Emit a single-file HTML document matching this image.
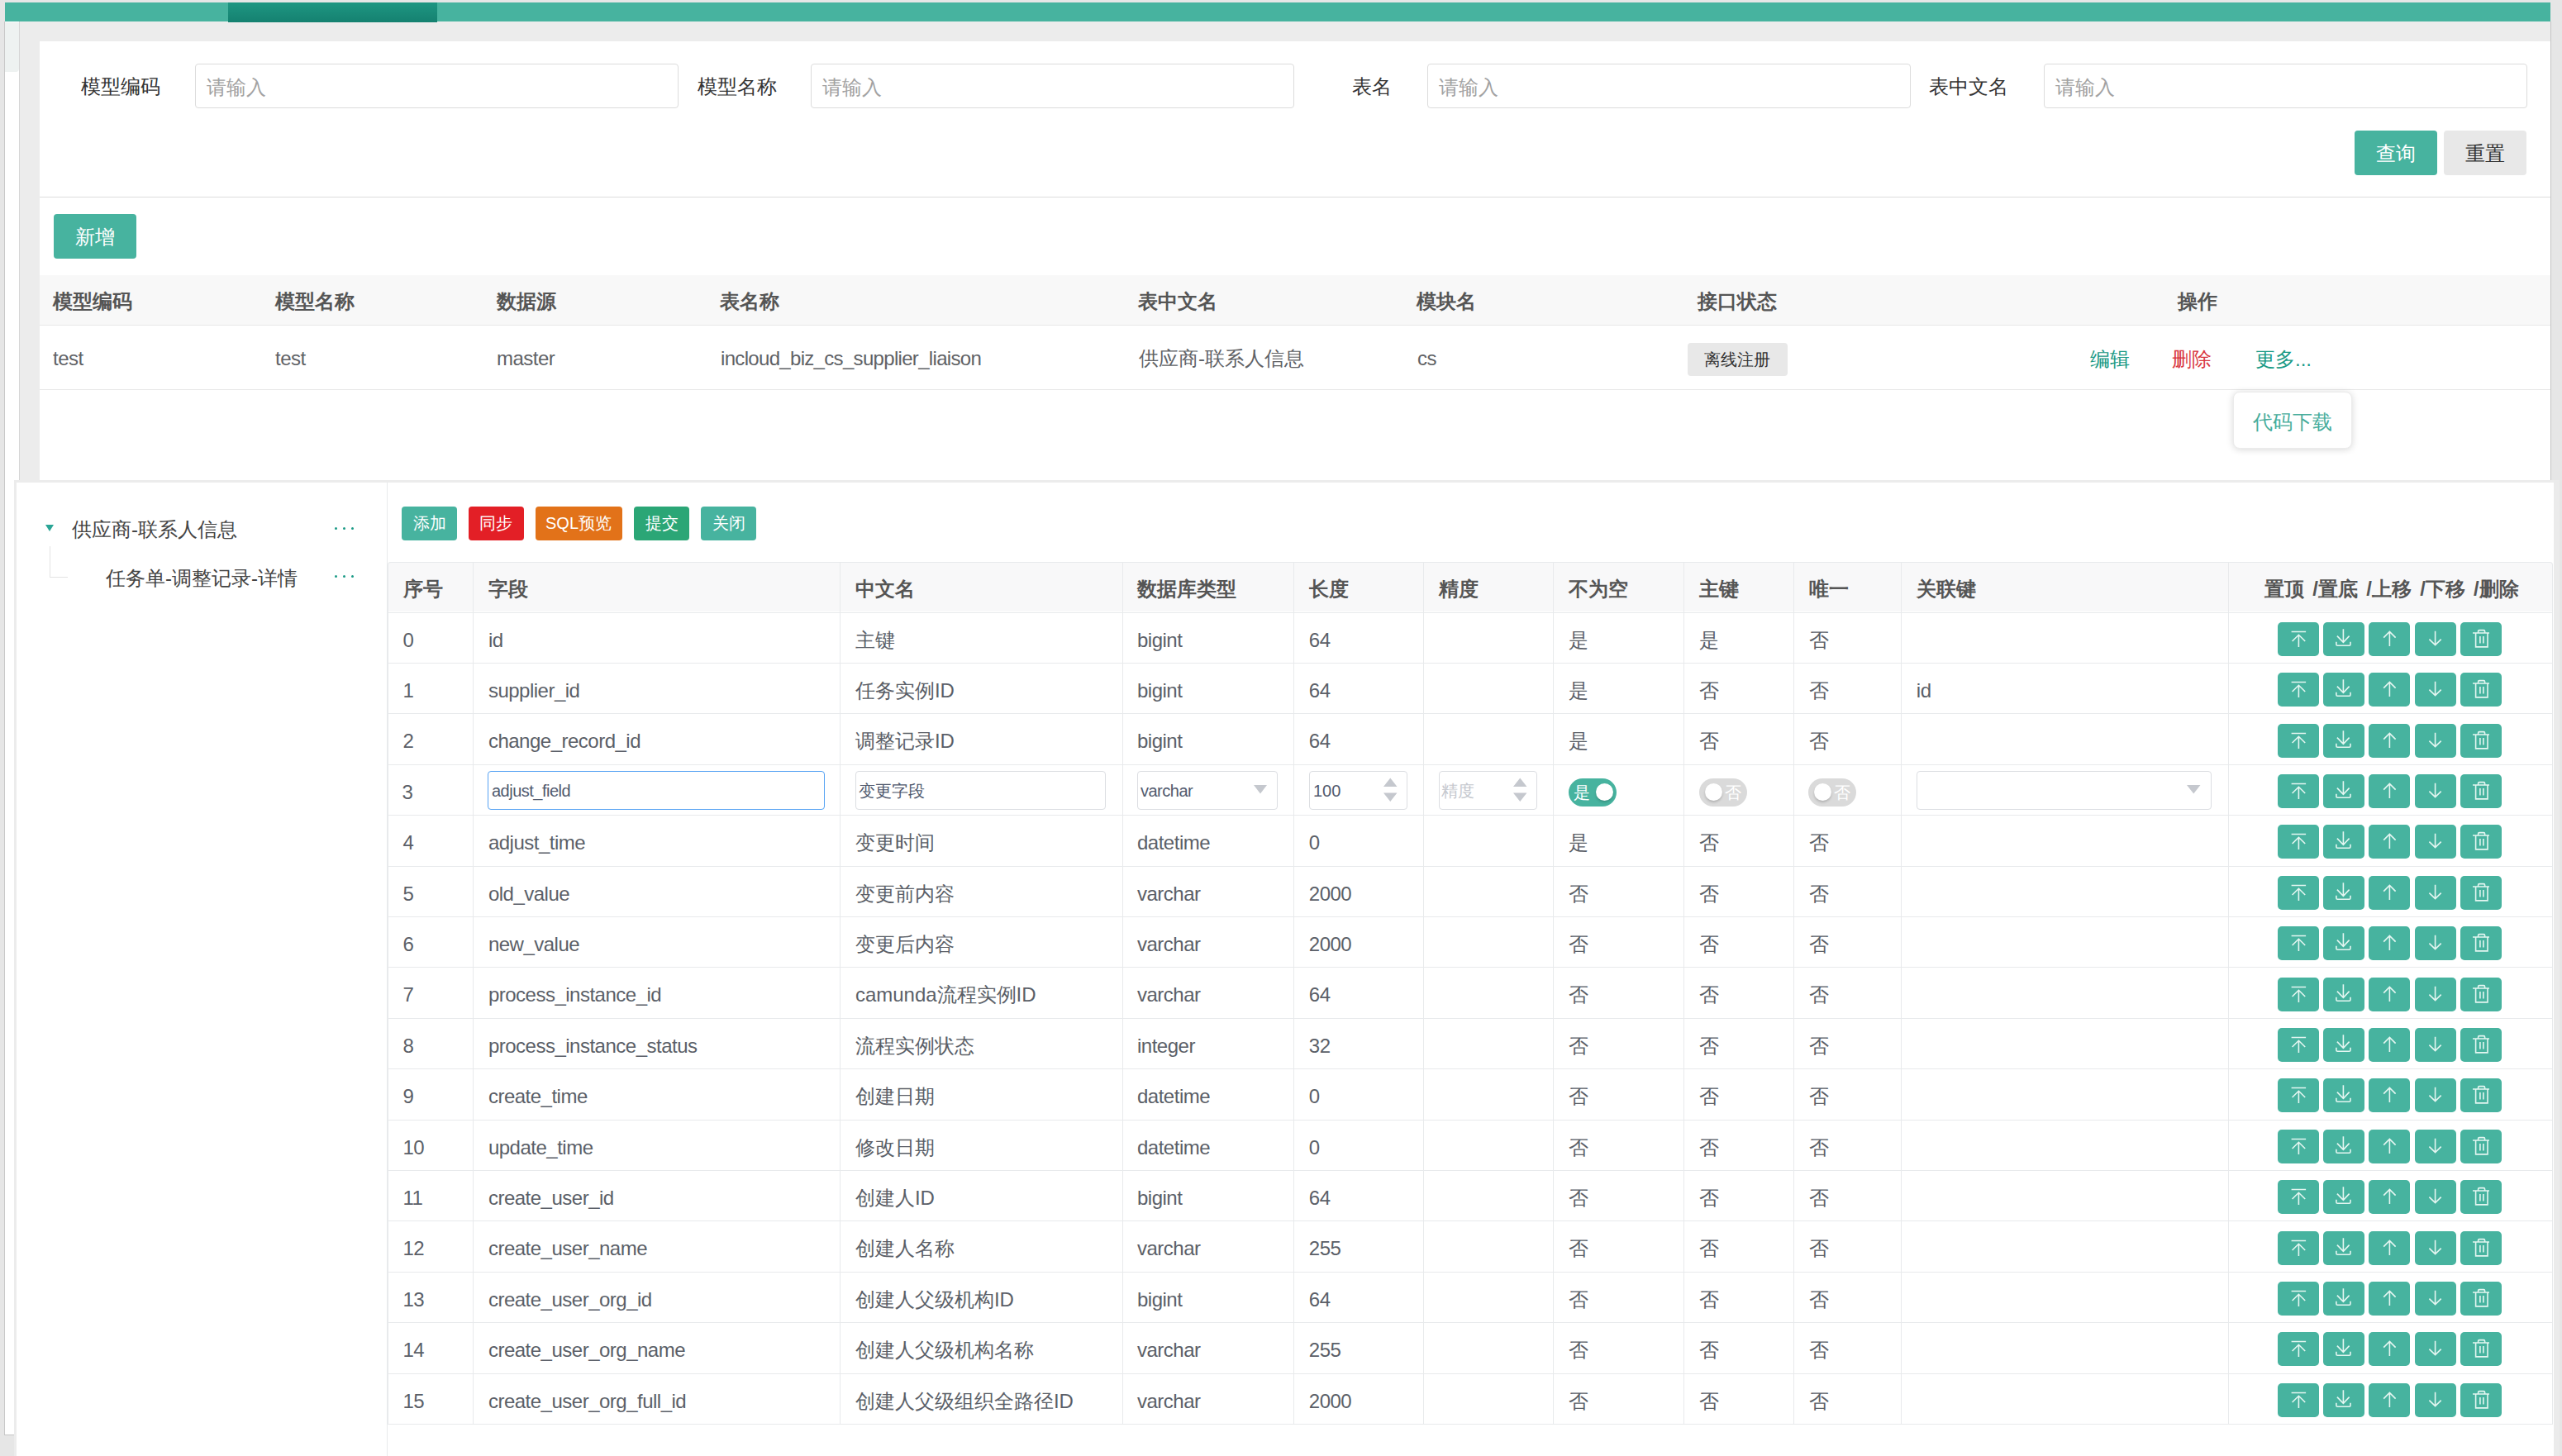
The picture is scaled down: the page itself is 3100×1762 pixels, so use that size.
<!DOCTYPE html><html><head><meta charset="utf-8"><style>
*{box-sizing:border-box;margin:0;padding:0}
html,body{width:3100px;height:1762px;overflow:hidden;background:#e6e6e6;font-family:"Liberation Sans", sans-serif;}
.a{position:absolute}
.t{position:absolute;white-space:nowrap;font-size:24px;line-height:24px}
.en{letter-spacing:-0.5px}
.btn{position:absolute;border-radius:4px;color:#fff;text-align:center;white-space:nowrap}
.inp{position:absolute;border:1px solid #dcdee2;border-radius:4px;background:#fff}
.hd{font-weight:bold;color:#515a6e}
.cell{color:#5b5f68}
.vl{position:absolute;width:1px;background:#e8eaec}
.hl{position:absolute;height:1px;background:#e8eaec}
.ab{position:absolute;width:50px;height:41px;border-radius:5px;background:#47b39f}
.ab svg{position:absolute;left:0;top:0}
.sw{position:absolute;width:58px;height:34px;border-radius:17px}
.knob{position:absolute;width:21px;height:21px;border-radius:50%;background:#fff;top:6px;box-shadow:0 2px 3px rgba(0,0,0,.18)}
</style></head><body><div class="a" style="left:5px;top:26px;width:1px;height:1711px;background:#c8c8c8"></div>
<div class="a" style="left:6px;top:26px;width:17px;height:1710px;background:#fff"></div><div class="a" style="left:5px;top:1736px;width:14px;height:1px;background:#c4c4c4"></div>
<div class="a" style="left:6px;top:27px;width:17px;height:60px;background:#eef2f1;border-radius:0 0 4px 0"></div>
<div class="a" style="left:23px;top:26px;width:1px;height:1710px;background:#d6d6d6"></div>
<div class="a" style="left:24px;top:26px;width:3062px;height:555px;background:#ececec"></div>
<div class="a" style="left:6px;top:3px;width:3080px;height:23px;background:#47b39f"></div>
<div class="a" style="left:276px;top:3px;width:253px;height:23.5px;background:linear-gradient(#1e9682,#158170)"></div>
<div class="a" style="left:48px;top:50px;width:3038px;height:531px;background:#fff"></div>
<div class="a" style="left:3086px;top:26px;width:1px;height:555px;background:#c4c4c4"></div>
<div class="t" style="left:-106px;width:300px;text-align:right;top:93px;color:#333">模型编码</div>
<div class="inp" style="left:236px;top:77px;width:585px;height:54px;border-color:#dcdcdc"></div>
<div class="t" style="left:250px;top:94px;color:#a2a2a2">请输入</div>
<div class="t" style="left:640px;width:300px;text-align:right;top:93px;color:#333">模型名称</div>
<div class="inp" style="left:981px;top:77px;width:585px;height:54px;border-color:#dcdcdc"></div>
<div class="t" style="left:995px;top:94px;color:#a2a2a2">请输入</div>
<div class="t" style="left:1384px;width:300px;text-align:right;top:93px;color:#333">表名</div>
<div class="inp" style="left:1727px;top:77px;width:585px;height:54px;border-color:#dcdcdc"></div>
<div class="t" style="left:1741px;top:94px;color:#a2a2a2">请输入</div>
<div class="t" style="left:2130px;width:300px;text-align:right;top:93px;color:#333">表中文名</div>
<div class="inp" style="left:2473px;top:77px;width:585px;height:54px;border-color:#dcdcdc"></div>
<div class="t" style="left:2487px;top:94px;color:#a2a2a2">请输入</div>
<div class="btn" style="left:2849px;top:158px;width:100px;height:54px;line-height:56px;font-size:24px;background:#47b39f">查询</div>
<div class="btn" style="left:2957px;top:158px;width:100px;height:54px;line-height:56px;font-size:24px;background:#e8e8e8;color:#333">重置</div>
<div class="a" style="left:48px;top:238px;width:3038px;height:1px;background:#dcdcdc"></div>
<div class="btn" style="left:65px;top:259px;width:100px;height:54px;line-height:56px;font-size:24px;background:#47b39f">新增</div>
<div class="a" style="left:48px;top:333px;width:3038px;height:61px;background:#f8f8f8;border-bottom:1px solid #e8e8e8"></div>
<div class="t hd" style="left:64px;top:353px;color:#555">模型编码</div>
<div class="t hd" style="left:333px;top:353px;color:#555">模型名称</div>
<div class="t hd" style="left:601px;top:353px;color:#555">数据源</div>
<div class="t hd" style="left:871px;top:353px;color:#555">表名称</div>
<div class="t hd" style="left:1377px;top:353px;color:#555">表中文名</div>
<div class="t hd" style="left:1714px;top:353px;color:#555">模块名</div>
<div class="t hd" style="left:2054px;top:353px;color:#555">接口状态</div>
<div class="t hd" style="left:2635px;top:353px;color:#555">操作</div>
<div class="a" style="left:48px;top:471px;width:3038px;height:1px;background:#e8e8e8"></div>
<div class="t en" style="left:64px;top:422px;color:#606266;">test</div>
<div class="t en" style="left:333px;top:422px;color:#606266;">test</div>
<div class="t en" style="left:601px;top:422px;color:#606266;">master</div>
<div class="t en" style="left:872px;top:422px;color:#606266;letter-spacing:-0.68px">incloud_biz_cs_supplier_liaison</div>
<div class="t" style="left:1378px;top:422px;color:#606266;">供应商-联系人信息</div>
<div class="t en" style="left:1715px;top:422px;color:#606266;">cs</div>
<div class="a" style="left:2042px;top:415px;width:121px;height:40px;background:#e8e8e8;border-radius:4px"></div>
<div class="t" style="left:2062px;top:425px;font-size:20px;line-height:20px;color:#333">离线注册</div>
<div class="t" style="left:2529px;top:423px;color:#1a9a86">编辑</div>
<div class="t" style="left:2628px;top:423px;color:#d9363e">删除</div>
<div class="t" style="left:2729px;top:423px;color:#1a9a86">更多...</div>
<div class="a" style="left:2702px;top:474px;width:144px;height:69px;background:#fff;border-radius:8px;box-shadow:0 1px 8px rgba(0,0,0,.16);border:1px solid #ececec"></div>
<div class="t" style="left:2726px;top:499px;color:#47ad9c">代码下载</div>
<div class="a" style="left:17px;top:581px;width:3073px;height:1200px;background:#fff;border:3px solid #ececec;border-right:none;border-bottom:none"></div><div class="a" style="left:3090px;top:581px;width:7px;height:1200px;background:#ebebeb"></div>
<div class="a" style="left:468px;top:584px;width:1px;height:1200px;background:#e8eaec"></div>
<svg class="a" style="left:54px;top:634px" width="12" height="10"><path d="M1 1 L11 1 L6 9 Z" fill="#2ba596"/></svg>
<div class="t" style="left:87px;top:629px;color:#444">供应商-联系人信息</div>
<div class="a" style="left:60px;top:661px;width:1px;height:37px;background:#e3e3e3"></div>
<div class="a" style="left:60px;top:698px;width:22px;height:1px;background:#e3e3e3"></div>
<div class="t" style="left:128px;top:688px;color:#444">任务单-调整记录-详情</div>
<div class="a" style="left:405px;top:637.5px;width:3px;height:3px;border-radius:50%;background:#1a9a86"></div>
<div class="a" style="left:415px;top:637.5px;width:3px;height:3px;border-radius:50%;background:#1a9a86"></div>
<div class="a" style="left:425px;top:637.5px;width:3px;height:3px;border-radius:50%;background:#1a9a86"></div>
<div class="a" style="left:405px;top:695.5px;width:3px;height:3px;border-radius:50%;background:#1a9a86"></div>
<div class="a" style="left:415px;top:695.5px;width:3px;height:3px;border-radius:50%;background:#1a9a86"></div>
<div class="a" style="left:425px;top:695.5px;width:3px;height:3px;border-radius:50%;background:#1a9a86"></div>
<div class="btn" style="left:486px;top:613px;width:67px;height:41px;line-height:41px;font-size:20px;background:#47b39f">添加</div>
<div class="btn" style="left:566.5px;top:613px;width:67px;height:41px;line-height:41px;font-size:20px;background:#e31f26">同步</div>
<div class="btn" style="left:647.5px;top:613px;width:105px;height:41px;line-height:41px;font-size:20px;background:#e27219">SQL预览</div>
<div class="btn" style="left:767px;top:613px;width:67px;height:41px;line-height:41px;font-size:20px;background:#2ba676">提交</div>
<div class="btn" style="left:848px;top:613px;width:67px;height:41px;line-height:41px;font-size:20px;background:#47b39f">关闭</div>
<div class="a" style="left:469px;top:680.3px;width:2620px;height:60.200000000000045px;background:#f8f8f9;border-radius:4px 4px 0 0"></div>
<div class="a" style="left:469px;top:680.3px;width:2620px;height:1043.6000000000001px;border:1px solid #e8eaec;border-bottom:none;border-radius:4px 4px 0 0"></div>
<div class="vl" style="left:572.4px;top:680.3px;height:1042.6000000000001px"></div>
<div class="vl" style="left:1016.4px;top:680.3px;height:1042.6000000000001px"></div>
<div class="vl" style="left:1357.5px;top:680.3px;height:1042.6000000000001px"></div>
<div class="vl" style="left:1565.3px;top:680.3px;height:1042.6000000000001px"></div>
<div class="vl" style="left:1722.2px;top:680.3px;height:1042.6000000000001px"></div>
<div class="vl" style="left:1879.3px;top:680.3px;height:1042.6000000000001px"></div>
<div class="vl" style="left:2037.1px;top:680.3px;height:1042.6000000000001px"></div>
<div class="vl" style="left:2170px;top:680.3px;height:1042.6000000000001px"></div>
<div class="vl" style="left:2300.3px;top:680.3px;height:1042.6000000000001px"></div>
<div class="vl" style="left:2695.8px;top:680.3px;height:1042.6000000000001px"></div>
<div class="hl" style="left:469px;top:740.50px;width:2620px"></div>
<div class="hl" style="left:469px;top:801.90px;width:2620px"></div>
<div class="hl" style="left:469px;top:863.30px;width:2620px"></div>
<div class="hl" style="left:469px;top:924.70px;width:2620px"></div>
<div class="hl" style="left:469px;top:986.10px;width:2620px"></div>
<div class="hl" style="left:469px;top:1047.50px;width:2620px"></div>
<div class="hl" style="left:469px;top:1108.90px;width:2620px"></div>
<div class="hl" style="left:469px;top:1170.30px;width:2620px"></div>
<div class="hl" style="left:469px;top:1231.70px;width:2620px"></div>
<div class="hl" style="left:469px;top:1293.10px;width:2620px"></div>
<div class="hl" style="left:469px;top:1354.50px;width:2620px"></div>
<div class="hl" style="left:469px;top:1415.90px;width:2620px"></div>
<div class="hl" style="left:469px;top:1477.30px;width:2620px"></div>
<div class="hl" style="left:469px;top:1538.70px;width:2620px"></div>
<div class="hl" style="left:469px;top:1600.10px;width:2620px"></div>
<div class="hl" style="left:469px;top:1661.50px;width:2620px"></div>
<div class="hl" style="left:469px;top:1722.90px;width:2620px"></div>
<div class="t hd" style="left:487.5px;top:701px;color:#555">序号</div>
<div class="t hd" style="left:590.9px;top:701px;color:#555">字段</div>
<div class="t hd" style="left:1034.9px;top:701px;color:#555">中文名</div>
<div class="t hd" style="left:1376.0px;top:701px;color:#555">数据库类型</div>
<div class="t hd" style="left:1583.8px;top:701px;color:#555">长度</div>
<div class="t hd" style="left:1740.7px;top:701px;color:#555">精度</div>
<div class="t hd" style="left:1897.8px;top:701px;color:#555">不为空</div>
<div class="t hd" style="left:2055.6px;top:701px;color:#555">主键</div>
<div class="t hd" style="left:2188.5px;top:701px;color:#555">唯一</div>
<div class="t hd" style="left:2318.8px;top:701px;color:#555">关联键</div>
<div class="t hd" style="left:2740px;top:701px;color:#555;word-spacing:3.6px">置顶 /置底 /上移 /下移 /删除</div>
<div class="t cell en" style="left:487.5px;top:762.50px">0</div>
<div class="t cell en" style="left:590.9px;top:762.50px">id</div>
<div class="t cell" style="left:1034.9px;top:762.50px">主键</div>
<div class="t cell en" style="left:1376.0px;top:762.50px">bigint</div>
<div class="t cell en" style="left:1583.8px;top:762.50px">64</div>
<div class="t cell" style="left:1897.8px;top:762.50px">是</div>
<div class="t cell" style="left:2055.6px;top:762.50px">是</div>
<div class="t cell" style="left:2188.5px;top:762.50px">否</div>
<div class="ab" style="left:2755.7px;top:752.70px"><svg width="50" height="41" stroke="#e4f6f1" stroke-width="1.6" fill="none" stroke-linecap="butt" stroke-linejoin="miter"><path d="M16.6 11.5 H34.1 M25.4 15.3 V30 M17.6 23 L25.4 15.3 L33.2 23"/></svg></div>
<div class="ab" style="left:2811px;top:752.70px"><svg width="50" height="41" stroke="#e4f6f1" stroke-width="1.6" fill="none" stroke-linecap="butt" stroke-linejoin="miter"><path d="M24.4 8.3 V24.3 M16.9 16.6 L24.4 24.3 L31.6 16.6 M15.9 23.8 V26.8 Q15.9 28.2 17.3 28.2 H31.6 Q33 28.2 33 26.8 V23.8"/></svg></div>
<div class="ab" style="left:2866px;top:752.70px"><svg width="50" height="41" stroke="#e4f6f1" stroke-width="1.6" fill="none" stroke-linecap="butt" stroke-linejoin="miter"><path d="M25.4 11.4 V29 M18.2 18.6 L25.4 11.4 L32.6 18.6"/></svg></div>
<div class="ab" style="left:2921.8px;top:752.70px"><svg width="50" height="41" stroke="#e4f6f1" stroke-width="1.6" fill="none" stroke-linecap="butt" stroke-linejoin="miter"><path d="M24.6 10.7 V27.6 M17.4 20.6 L24.6 27.6 L31.7 20.6"/></svg></div>
<div class="ab" style="left:2976.5px;top:752.70px"><svg width="50" height="41" stroke="#e4f6f1" stroke-width="1.6" fill="none" stroke-linecap="butt" stroke-linejoin="miter"><path d="M15 13 H35 M21.6 12.8 V11 Q21.6 9.6 23 9.6 H28.2 Q29.6 9.6 29.6 11 V12.8 M18.6 13 V29.9 H33 V13 M23.9 17 V25.5 M27.9 17 V25.5"/></svg></div>
<div class="t cell en" style="left:487.5px;top:823.90px">1</div>
<div class="t cell en" style="left:590.9px;top:823.90px">supplier_id</div>
<div class="t cell" style="left:1034.9px;top:823.90px">任务实例ID</div>
<div class="t cell en" style="left:1376.0px;top:823.90px">bigint</div>
<div class="t cell en" style="left:1583.8px;top:823.90px">64</div>
<div class="t cell" style="left:1897.8px;top:823.90px">是</div>
<div class="t cell" style="left:2055.6px;top:823.90px">否</div>
<div class="t cell" style="left:2188.5px;top:823.90px">否</div>
<div class="t cell en" style="left:2318.8px;top:823.90px">id</div>
<div class="ab" style="left:2755.7px;top:814.10px"><svg width="50" height="41" stroke="#e4f6f1" stroke-width="1.6" fill="none" stroke-linecap="butt" stroke-linejoin="miter"><path d="M16.6 11.5 H34.1 M25.4 15.3 V30 M17.6 23 L25.4 15.3 L33.2 23"/></svg></div>
<div class="ab" style="left:2811px;top:814.10px"><svg width="50" height="41" stroke="#e4f6f1" stroke-width="1.6" fill="none" stroke-linecap="butt" stroke-linejoin="miter"><path d="M24.4 8.3 V24.3 M16.9 16.6 L24.4 24.3 L31.6 16.6 M15.9 23.8 V26.8 Q15.9 28.2 17.3 28.2 H31.6 Q33 28.2 33 26.8 V23.8"/></svg></div>
<div class="ab" style="left:2866px;top:814.10px"><svg width="50" height="41" stroke="#e4f6f1" stroke-width="1.6" fill="none" stroke-linecap="butt" stroke-linejoin="miter"><path d="M25.4 11.4 V29 M18.2 18.6 L25.4 11.4 L32.6 18.6"/></svg></div>
<div class="ab" style="left:2921.8px;top:814.10px"><svg width="50" height="41" stroke="#e4f6f1" stroke-width="1.6" fill="none" stroke-linecap="butt" stroke-linejoin="miter"><path d="M24.6 10.7 V27.6 M17.4 20.6 L24.6 27.6 L31.7 20.6"/></svg></div>
<div class="ab" style="left:2976.5px;top:814.10px"><svg width="50" height="41" stroke="#e4f6f1" stroke-width="1.6" fill="none" stroke-linecap="butt" stroke-linejoin="miter"><path d="M15 13 H35 M21.6 12.8 V11 Q21.6 9.6 23 9.6 H28.2 Q29.6 9.6 29.6 11 V12.8 M18.6 13 V29.9 H33 V13 M23.9 17 V25.5 M27.9 17 V25.5"/></svg></div>
<div class="t cell en" style="left:487.5px;top:885.30px">2</div>
<div class="t cell en" style="left:590.9px;top:885.30px">change_record_id</div>
<div class="t cell" style="left:1034.9px;top:885.30px">调整记录ID</div>
<div class="t cell en" style="left:1376.0px;top:885.30px">bigint</div>
<div class="t cell en" style="left:1583.8px;top:885.30px">64</div>
<div class="t cell" style="left:1897.8px;top:885.30px">是</div>
<div class="t cell" style="left:2055.6px;top:885.30px">否</div>
<div class="t cell" style="left:2188.5px;top:885.30px">否</div>
<div class="ab" style="left:2755.7px;top:875.50px"><svg width="50" height="41" stroke="#e4f6f1" stroke-width="1.6" fill="none" stroke-linecap="butt" stroke-linejoin="miter"><path d="M16.6 11.5 H34.1 M25.4 15.3 V30 M17.6 23 L25.4 15.3 L33.2 23"/></svg></div>
<div class="ab" style="left:2811px;top:875.50px"><svg width="50" height="41" stroke="#e4f6f1" stroke-width="1.6" fill="none" stroke-linecap="butt" stroke-linejoin="miter"><path d="M24.4 8.3 V24.3 M16.9 16.6 L24.4 24.3 L31.6 16.6 M15.9 23.8 V26.8 Q15.9 28.2 17.3 28.2 H31.6 Q33 28.2 33 26.8 V23.8"/></svg></div>
<div class="ab" style="left:2866px;top:875.50px"><svg width="50" height="41" stroke="#e4f6f1" stroke-width="1.6" fill="none" stroke-linecap="butt" stroke-linejoin="miter"><path d="M25.4 11.4 V29 M18.2 18.6 L25.4 11.4 L32.6 18.6"/></svg></div>
<div class="ab" style="left:2921.8px;top:875.50px"><svg width="50" height="41" stroke="#e4f6f1" stroke-width="1.6" fill="none" stroke-linecap="butt" stroke-linejoin="miter"><path d="M24.6 10.7 V27.6 M17.4 20.6 L24.6 27.6 L31.7 20.6"/></svg></div>
<div class="ab" style="left:2976.5px;top:875.50px"><svg width="50" height="41" stroke="#e4f6f1" stroke-width="1.6" fill="none" stroke-linecap="butt" stroke-linejoin="miter"><path d="M15 13 H35 M21.6 12.8 V11 Q21.6 9.6 23 9.6 H28.2 Q29.6 9.6 29.6 11 V12.8 M18.6 13 V29.9 H33 V13 M23.9 17 V25.5 M27.9 17 V25.5"/></svg></div>
<div class="ab" style="left:2755.7px;top:936.90px"><svg width="50" height="41" stroke="#e4f6f1" stroke-width="1.6" fill="none" stroke-linecap="butt" stroke-linejoin="miter"><path d="M16.6 11.5 H34.1 M25.4 15.3 V30 M17.6 23 L25.4 15.3 L33.2 23"/></svg></div>
<div class="ab" style="left:2811px;top:936.90px"><svg width="50" height="41" stroke="#e4f6f1" stroke-width="1.6" fill="none" stroke-linecap="butt" stroke-linejoin="miter"><path d="M24.4 8.3 V24.3 M16.9 16.6 L24.4 24.3 L31.6 16.6 M15.9 23.8 V26.8 Q15.9 28.2 17.3 28.2 H31.6 Q33 28.2 33 26.8 V23.8"/></svg></div>
<div class="ab" style="left:2866px;top:936.90px"><svg width="50" height="41" stroke="#e4f6f1" stroke-width="1.6" fill="none" stroke-linecap="butt" stroke-linejoin="miter"><path d="M25.4 11.4 V29 M18.2 18.6 L25.4 11.4 L32.6 18.6"/></svg></div>
<div class="ab" style="left:2921.8px;top:936.90px"><svg width="50" height="41" stroke="#e4f6f1" stroke-width="1.6" fill="none" stroke-linecap="butt" stroke-linejoin="miter"><path d="M24.6 10.7 V27.6 M17.4 20.6 L24.6 27.6 L31.7 20.6"/></svg></div>
<div class="ab" style="left:2976.5px;top:936.90px"><svg width="50" height="41" stroke="#e4f6f1" stroke-width="1.6" fill="none" stroke-linecap="butt" stroke-linejoin="miter"><path d="M15 13 H35 M21.6 12.8 V11 Q21.6 9.6 23 9.6 H28.2 Q29.6 9.6 29.6 11 V12.8 M18.6 13 V29.9 H33 V13 M23.9 17 V25.5 M27.9 17 V25.5"/></svg></div>
<div class="t cell en" style="left:487.5px;top:1008.10px">4</div>
<div class="t cell en" style="left:590.9px;top:1008.10px">adjust_time</div>
<div class="t cell" style="left:1034.9px;top:1008.10px">变更时间</div>
<div class="t cell en" style="left:1376.0px;top:1008.10px">datetime</div>
<div class="t cell en" style="left:1583.8px;top:1008.10px">0</div>
<div class="t cell" style="left:1897.8px;top:1008.10px">是</div>
<div class="t cell" style="left:2055.6px;top:1008.10px">否</div>
<div class="t cell" style="left:2188.5px;top:1008.10px">否</div>
<div class="ab" style="left:2755.7px;top:998.30px"><svg width="50" height="41" stroke="#e4f6f1" stroke-width="1.6" fill="none" stroke-linecap="butt" stroke-linejoin="miter"><path d="M16.6 11.5 H34.1 M25.4 15.3 V30 M17.6 23 L25.4 15.3 L33.2 23"/></svg></div>
<div class="ab" style="left:2811px;top:998.30px"><svg width="50" height="41" stroke="#e4f6f1" stroke-width="1.6" fill="none" stroke-linecap="butt" stroke-linejoin="miter"><path d="M24.4 8.3 V24.3 M16.9 16.6 L24.4 24.3 L31.6 16.6 M15.9 23.8 V26.8 Q15.9 28.2 17.3 28.2 H31.6 Q33 28.2 33 26.8 V23.8"/></svg></div>
<div class="ab" style="left:2866px;top:998.30px"><svg width="50" height="41" stroke="#e4f6f1" stroke-width="1.6" fill="none" stroke-linecap="butt" stroke-linejoin="miter"><path d="M25.4 11.4 V29 M18.2 18.6 L25.4 11.4 L32.6 18.6"/></svg></div>
<div class="ab" style="left:2921.8px;top:998.30px"><svg width="50" height="41" stroke="#e4f6f1" stroke-width="1.6" fill="none" stroke-linecap="butt" stroke-linejoin="miter"><path d="M24.6 10.7 V27.6 M17.4 20.6 L24.6 27.6 L31.7 20.6"/></svg></div>
<div class="ab" style="left:2976.5px;top:998.30px"><svg width="50" height="41" stroke="#e4f6f1" stroke-width="1.6" fill="none" stroke-linecap="butt" stroke-linejoin="miter"><path d="M15 13 H35 M21.6 12.8 V11 Q21.6 9.6 23 9.6 H28.2 Q29.6 9.6 29.6 11 V12.8 M18.6 13 V29.9 H33 V13 M23.9 17 V25.5 M27.9 17 V25.5"/></svg></div>
<div class="t cell en" style="left:487.5px;top:1069.50px">5</div>
<div class="t cell en" style="left:590.9px;top:1069.50px">old_value</div>
<div class="t cell" style="left:1034.9px;top:1069.50px">变更前内容</div>
<div class="t cell en" style="left:1376.0px;top:1069.50px">varchar</div>
<div class="t cell en" style="left:1583.8px;top:1069.50px">2000</div>
<div class="t cell" style="left:1897.8px;top:1069.50px">否</div>
<div class="t cell" style="left:2055.6px;top:1069.50px">否</div>
<div class="t cell" style="left:2188.5px;top:1069.50px">否</div>
<div class="ab" style="left:2755.7px;top:1059.70px"><svg width="50" height="41" stroke="#e4f6f1" stroke-width="1.6" fill="none" stroke-linecap="butt" stroke-linejoin="miter"><path d="M16.6 11.5 H34.1 M25.4 15.3 V30 M17.6 23 L25.4 15.3 L33.2 23"/></svg></div>
<div class="ab" style="left:2811px;top:1059.70px"><svg width="50" height="41" stroke="#e4f6f1" stroke-width="1.6" fill="none" stroke-linecap="butt" stroke-linejoin="miter"><path d="M24.4 8.3 V24.3 M16.9 16.6 L24.4 24.3 L31.6 16.6 M15.9 23.8 V26.8 Q15.9 28.2 17.3 28.2 H31.6 Q33 28.2 33 26.8 V23.8"/></svg></div>
<div class="ab" style="left:2866px;top:1059.70px"><svg width="50" height="41" stroke="#e4f6f1" stroke-width="1.6" fill="none" stroke-linecap="butt" stroke-linejoin="miter"><path d="M25.4 11.4 V29 M18.2 18.6 L25.4 11.4 L32.6 18.6"/></svg></div>
<div class="ab" style="left:2921.8px;top:1059.70px"><svg width="50" height="41" stroke="#e4f6f1" stroke-width="1.6" fill="none" stroke-linecap="butt" stroke-linejoin="miter"><path d="M24.6 10.7 V27.6 M17.4 20.6 L24.6 27.6 L31.7 20.6"/></svg></div>
<div class="ab" style="left:2976.5px;top:1059.70px"><svg width="50" height="41" stroke="#e4f6f1" stroke-width="1.6" fill="none" stroke-linecap="butt" stroke-linejoin="miter"><path d="M15 13 H35 M21.6 12.8 V11 Q21.6 9.6 23 9.6 H28.2 Q29.6 9.6 29.6 11 V12.8 M18.6 13 V29.9 H33 V13 M23.9 17 V25.5 M27.9 17 V25.5"/></svg></div>
<div class="t cell en" style="left:487.5px;top:1130.90px">6</div>
<div class="t cell en" style="left:590.9px;top:1130.90px">new_value</div>
<div class="t cell" style="left:1034.9px;top:1130.90px">变更后内容</div>
<div class="t cell en" style="left:1376.0px;top:1130.90px">varchar</div>
<div class="t cell en" style="left:1583.8px;top:1130.90px">2000</div>
<div class="t cell" style="left:1897.8px;top:1130.90px">否</div>
<div class="t cell" style="left:2055.6px;top:1130.90px">否</div>
<div class="t cell" style="left:2188.5px;top:1130.90px">否</div>
<div class="ab" style="left:2755.7px;top:1121.10px"><svg width="50" height="41" stroke="#e4f6f1" stroke-width="1.6" fill="none" stroke-linecap="butt" stroke-linejoin="miter"><path d="M16.6 11.5 H34.1 M25.4 15.3 V30 M17.6 23 L25.4 15.3 L33.2 23"/></svg></div>
<div class="ab" style="left:2811px;top:1121.10px"><svg width="50" height="41" stroke="#e4f6f1" stroke-width="1.6" fill="none" stroke-linecap="butt" stroke-linejoin="miter"><path d="M24.4 8.3 V24.3 M16.9 16.6 L24.4 24.3 L31.6 16.6 M15.9 23.8 V26.8 Q15.9 28.2 17.3 28.2 H31.6 Q33 28.2 33 26.8 V23.8"/></svg></div>
<div class="ab" style="left:2866px;top:1121.10px"><svg width="50" height="41" stroke="#e4f6f1" stroke-width="1.6" fill="none" stroke-linecap="butt" stroke-linejoin="miter"><path d="M25.4 11.4 V29 M18.2 18.6 L25.4 11.4 L32.6 18.6"/></svg></div>
<div class="ab" style="left:2921.8px;top:1121.10px"><svg width="50" height="41" stroke="#e4f6f1" stroke-width="1.6" fill="none" stroke-linecap="butt" stroke-linejoin="miter"><path d="M24.6 10.7 V27.6 M17.4 20.6 L24.6 27.6 L31.7 20.6"/></svg></div>
<div class="ab" style="left:2976.5px;top:1121.10px"><svg width="50" height="41" stroke="#e4f6f1" stroke-width="1.6" fill="none" stroke-linecap="butt" stroke-linejoin="miter"><path d="M15 13 H35 M21.6 12.8 V11 Q21.6 9.6 23 9.6 H28.2 Q29.6 9.6 29.6 11 V12.8 M18.6 13 V29.9 H33 V13 M23.9 17 V25.5 M27.9 17 V25.5"/></svg></div>
<div class="t cell en" style="left:487.5px;top:1192.30px">7</div>
<div class="t cell en" style="left:590.9px;top:1192.30px">process_instance_id</div>
<div class="t cell" style="left:1034.9px;top:1192.30px">camunda流程实例ID</div>
<div class="t cell en" style="left:1376.0px;top:1192.30px">varchar</div>
<div class="t cell en" style="left:1583.8px;top:1192.30px">64</div>
<div class="t cell" style="left:1897.8px;top:1192.30px">否</div>
<div class="t cell" style="left:2055.6px;top:1192.30px">否</div>
<div class="t cell" style="left:2188.5px;top:1192.30px">否</div>
<div class="ab" style="left:2755.7px;top:1182.50px"><svg width="50" height="41" stroke="#e4f6f1" stroke-width="1.6" fill="none" stroke-linecap="butt" stroke-linejoin="miter"><path d="M16.6 11.5 H34.1 M25.4 15.3 V30 M17.6 23 L25.4 15.3 L33.2 23"/></svg></div>
<div class="ab" style="left:2811px;top:1182.50px"><svg width="50" height="41" stroke="#e4f6f1" stroke-width="1.6" fill="none" stroke-linecap="butt" stroke-linejoin="miter"><path d="M24.4 8.3 V24.3 M16.9 16.6 L24.4 24.3 L31.6 16.6 M15.9 23.8 V26.8 Q15.9 28.2 17.3 28.2 H31.6 Q33 28.2 33 26.8 V23.8"/></svg></div>
<div class="ab" style="left:2866px;top:1182.50px"><svg width="50" height="41" stroke="#e4f6f1" stroke-width="1.6" fill="none" stroke-linecap="butt" stroke-linejoin="miter"><path d="M25.4 11.4 V29 M18.2 18.6 L25.4 11.4 L32.6 18.6"/></svg></div>
<div class="ab" style="left:2921.8px;top:1182.50px"><svg width="50" height="41" stroke="#e4f6f1" stroke-width="1.6" fill="none" stroke-linecap="butt" stroke-linejoin="miter"><path d="M24.6 10.7 V27.6 M17.4 20.6 L24.6 27.6 L31.7 20.6"/></svg></div>
<div class="ab" style="left:2976.5px;top:1182.50px"><svg width="50" height="41" stroke="#e4f6f1" stroke-width="1.6" fill="none" stroke-linecap="butt" stroke-linejoin="miter"><path d="M15 13 H35 M21.6 12.8 V11 Q21.6 9.6 23 9.6 H28.2 Q29.6 9.6 29.6 11 V12.8 M18.6 13 V29.9 H33 V13 M23.9 17 V25.5 M27.9 17 V25.5"/></svg></div>
<div class="t cell en" style="left:487.5px;top:1253.70px">8</div>
<div class="t cell en" style="left:590.9px;top:1253.70px">process_instance_status</div>
<div class="t cell" style="left:1034.9px;top:1253.70px">流程实例状态</div>
<div class="t cell en" style="left:1376.0px;top:1253.70px">integer</div>
<div class="t cell en" style="left:1583.8px;top:1253.70px">32</div>
<div class="t cell" style="left:1897.8px;top:1253.70px">否</div>
<div class="t cell" style="left:2055.6px;top:1253.70px">否</div>
<div class="t cell" style="left:2188.5px;top:1253.70px">否</div>
<div class="ab" style="left:2755.7px;top:1243.90px"><svg width="50" height="41" stroke="#e4f6f1" stroke-width="1.6" fill="none" stroke-linecap="butt" stroke-linejoin="miter"><path d="M16.6 11.5 H34.1 M25.4 15.3 V30 M17.6 23 L25.4 15.3 L33.2 23"/></svg></div>
<div class="ab" style="left:2811px;top:1243.90px"><svg width="50" height="41" stroke="#e4f6f1" stroke-width="1.6" fill="none" stroke-linecap="butt" stroke-linejoin="miter"><path d="M24.4 8.3 V24.3 M16.9 16.6 L24.4 24.3 L31.6 16.6 M15.9 23.8 V26.8 Q15.9 28.2 17.3 28.2 H31.6 Q33 28.2 33 26.8 V23.8"/></svg></div>
<div class="ab" style="left:2866px;top:1243.90px"><svg width="50" height="41" stroke="#e4f6f1" stroke-width="1.6" fill="none" stroke-linecap="butt" stroke-linejoin="miter"><path d="M25.4 11.4 V29 M18.2 18.6 L25.4 11.4 L32.6 18.6"/></svg></div>
<div class="ab" style="left:2921.8px;top:1243.90px"><svg width="50" height="41" stroke="#e4f6f1" stroke-width="1.6" fill="none" stroke-linecap="butt" stroke-linejoin="miter"><path d="M24.6 10.7 V27.6 M17.4 20.6 L24.6 27.6 L31.7 20.6"/></svg></div>
<div class="ab" style="left:2976.5px;top:1243.90px"><svg width="50" height="41" stroke="#e4f6f1" stroke-width="1.6" fill="none" stroke-linecap="butt" stroke-linejoin="miter"><path d="M15 13 H35 M21.6 12.8 V11 Q21.6 9.6 23 9.6 H28.2 Q29.6 9.6 29.6 11 V12.8 M18.6 13 V29.9 H33 V13 M23.9 17 V25.5 M27.9 17 V25.5"/></svg></div>
<div class="t cell en" style="left:487.5px;top:1315.10px">9</div>
<div class="t cell en" style="left:590.9px;top:1315.10px">create_time</div>
<div class="t cell" style="left:1034.9px;top:1315.10px">创建日期</div>
<div class="t cell en" style="left:1376.0px;top:1315.10px">datetime</div>
<div class="t cell en" style="left:1583.8px;top:1315.10px">0</div>
<div class="t cell" style="left:1897.8px;top:1315.10px">否</div>
<div class="t cell" style="left:2055.6px;top:1315.10px">否</div>
<div class="t cell" style="left:2188.5px;top:1315.10px">否</div>
<div class="ab" style="left:2755.7px;top:1305.30px"><svg width="50" height="41" stroke="#e4f6f1" stroke-width="1.6" fill="none" stroke-linecap="butt" stroke-linejoin="miter"><path d="M16.6 11.5 H34.1 M25.4 15.3 V30 M17.6 23 L25.4 15.3 L33.2 23"/></svg></div>
<div class="ab" style="left:2811px;top:1305.30px"><svg width="50" height="41" stroke="#e4f6f1" stroke-width="1.6" fill="none" stroke-linecap="butt" stroke-linejoin="miter"><path d="M24.4 8.3 V24.3 M16.9 16.6 L24.4 24.3 L31.6 16.6 M15.9 23.8 V26.8 Q15.9 28.2 17.3 28.2 H31.6 Q33 28.2 33 26.8 V23.8"/></svg></div>
<div class="ab" style="left:2866px;top:1305.30px"><svg width="50" height="41" stroke="#e4f6f1" stroke-width="1.6" fill="none" stroke-linecap="butt" stroke-linejoin="miter"><path d="M25.4 11.4 V29 M18.2 18.6 L25.4 11.4 L32.6 18.6"/></svg></div>
<div class="ab" style="left:2921.8px;top:1305.30px"><svg width="50" height="41" stroke="#e4f6f1" stroke-width="1.6" fill="none" stroke-linecap="butt" stroke-linejoin="miter"><path d="M24.6 10.7 V27.6 M17.4 20.6 L24.6 27.6 L31.7 20.6"/></svg></div>
<div class="ab" style="left:2976.5px;top:1305.30px"><svg width="50" height="41" stroke="#e4f6f1" stroke-width="1.6" fill="none" stroke-linecap="butt" stroke-linejoin="miter"><path d="M15 13 H35 M21.6 12.8 V11 Q21.6 9.6 23 9.6 H28.2 Q29.6 9.6 29.6 11 V12.8 M18.6 13 V29.9 H33 V13 M23.9 17 V25.5 M27.9 17 V25.5"/></svg></div>
<div class="t cell en" style="left:487.5px;top:1376.50px">10</div>
<div class="t cell en" style="left:590.9px;top:1376.50px">update_time</div>
<div class="t cell" style="left:1034.9px;top:1376.50px">修改日期</div>
<div class="t cell en" style="left:1376.0px;top:1376.50px">datetime</div>
<div class="t cell en" style="left:1583.8px;top:1376.50px">0</div>
<div class="t cell" style="left:1897.8px;top:1376.50px">否</div>
<div class="t cell" style="left:2055.6px;top:1376.50px">否</div>
<div class="t cell" style="left:2188.5px;top:1376.50px">否</div>
<div class="ab" style="left:2755.7px;top:1366.70px"><svg width="50" height="41" stroke="#e4f6f1" stroke-width="1.6" fill="none" stroke-linecap="butt" stroke-linejoin="miter"><path d="M16.6 11.5 H34.1 M25.4 15.3 V30 M17.6 23 L25.4 15.3 L33.2 23"/></svg></div>
<div class="ab" style="left:2811px;top:1366.70px"><svg width="50" height="41" stroke="#e4f6f1" stroke-width="1.6" fill="none" stroke-linecap="butt" stroke-linejoin="miter"><path d="M24.4 8.3 V24.3 M16.9 16.6 L24.4 24.3 L31.6 16.6 M15.9 23.8 V26.8 Q15.9 28.2 17.3 28.2 H31.6 Q33 28.2 33 26.8 V23.8"/></svg></div>
<div class="ab" style="left:2866px;top:1366.70px"><svg width="50" height="41" stroke="#e4f6f1" stroke-width="1.6" fill="none" stroke-linecap="butt" stroke-linejoin="miter"><path d="M25.4 11.4 V29 M18.2 18.6 L25.4 11.4 L32.6 18.6"/></svg></div>
<div class="ab" style="left:2921.8px;top:1366.70px"><svg width="50" height="41" stroke="#e4f6f1" stroke-width="1.6" fill="none" stroke-linecap="butt" stroke-linejoin="miter"><path d="M24.6 10.7 V27.6 M17.4 20.6 L24.6 27.6 L31.7 20.6"/></svg></div>
<div class="ab" style="left:2976.5px;top:1366.70px"><svg width="50" height="41" stroke="#e4f6f1" stroke-width="1.6" fill="none" stroke-linecap="butt" stroke-linejoin="miter"><path d="M15 13 H35 M21.6 12.8 V11 Q21.6 9.6 23 9.6 H28.2 Q29.6 9.6 29.6 11 V12.8 M18.6 13 V29.9 H33 V13 M23.9 17 V25.5 M27.9 17 V25.5"/></svg></div>
<div class="t cell en" style="left:487.5px;top:1437.90px">11</div>
<div class="t cell en" style="left:590.9px;top:1437.90px">create_user_id</div>
<div class="t cell" style="left:1034.9px;top:1437.90px">创建人ID</div>
<div class="t cell en" style="left:1376.0px;top:1437.90px">bigint</div>
<div class="t cell en" style="left:1583.8px;top:1437.90px">64</div>
<div class="t cell" style="left:1897.8px;top:1437.90px">否</div>
<div class="t cell" style="left:2055.6px;top:1437.90px">否</div>
<div class="t cell" style="left:2188.5px;top:1437.90px">否</div>
<div class="ab" style="left:2755.7px;top:1428.10px"><svg width="50" height="41" stroke="#e4f6f1" stroke-width="1.6" fill="none" stroke-linecap="butt" stroke-linejoin="miter"><path d="M16.6 11.5 H34.1 M25.4 15.3 V30 M17.6 23 L25.4 15.3 L33.2 23"/></svg></div>
<div class="ab" style="left:2811px;top:1428.10px"><svg width="50" height="41" stroke="#e4f6f1" stroke-width="1.6" fill="none" stroke-linecap="butt" stroke-linejoin="miter"><path d="M24.4 8.3 V24.3 M16.9 16.6 L24.4 24.3 L31.6 16.6 M15.9 23.8 V26.8 Q15.9 28.2 17.3 28.2 H31.6 Q33 28.2 33 26.8 V23.8"/></svg></div>
<div class="ab" style="left:2866px;top:1428.10px"><svg width="50" height="41" stroke="#e4f6f1" stroke-width="1.6" fill="none" stroke-linecap="butt" stroke-linejoin="miter"><path d="M25.4 11.4 V29 M18.2 18.6 L25.4 11.4 L32.6 18.6"/></svg></div>
<div class="ab" style="left:2921.8px;top:1428.10px"><svg width="50" height="41" stroke="#e4f6f1" stroke-width="1.6" fill="none" stroke-linecap="butt" stroke-linejoin="miter"><path d="M24.6 10.7 V27.6 M17.4 20.6 L24.6 27.6 L31.7 20.6"/></svg></div>
<div class="ab" style="left:2976.5px;top:1428.10px"><svg width="50" height="41" stroke="#e4f6f1" stroke-width="1.6" fill="none" stroke-linecap="butt" stroke-linejoin="miter"><path d="M15 13 H35 M21.6 12.8 V11 Q21.6 9.6 23 9.6 H28.2 Q29.6 9.6 29.6 11 V12.8 M18.6 13 V29.9 H33 V13 M23.9 17 V25.5 M27.9 17 V25.5"/></svg></div>
<div class="t cell en" style="left:487.5px;top:1499.30px">12</div>
<div class="t cell en" style="left:590.9px;top:1499.30px">create_user_name</div>
<div class="t cell" style="left:1034.9px;top:1499.30px">创建人名称</div>
<div class="t cell en" style="left:1376.0px;top:1499.30px">varchar</div>
<div class="t cell en" style="left:1583.8px;top:1499.30px">255</div>
<div class="t cell" style="left:1897.8px;top:1499.30px">否</div>
<div class="t cell" style="left:2055.6px;top:1499.30px">否</div>
<div class="t cell" style="left:2188.5px;top:1499.30px">否</div>
<div class="ab" style="left:2755.7px;top:1489.50px"><svg width="50" height="41" stroke="#e4f6f1" stroke-width="1.6" fill="none" stroke-linecap="butt" stroke-linejoin="miter"><path d="M16.6 11.5 H34.1 M25.4 15.3 V30 M17.6 23 L25.4 15.3 L33.2 23"/></svg></div>
<div class="ab" style="left:2811px;top:1489.50px"><svg width="50" height="41" stroke="#e4f6f1" stroke-width="1.6" fill="none" stroke-linecap="butt" stroke-linejoin="miter"><path d="M24.4 8.3 V24.3 M16.9 16.6 L24.4 24.3 L31.6 16.6 M15.9 23.8 V26.8 Q15.9 28.2 17.3 28.2 H31.6 Q33 28.2 33 26.8 V23.8"/></svg></div>
<div class="ab" style="left:2866px;top:1489.50px"><svg width="50" height="41" stroke="#e4f6f1" stroke-width="1.6" fill="none" stroke-linecap="butt" stroke-linejoin="miter"><path d="M25.4 11.4 V29 M18.2 18.6 L25.4 11.4 L32.6 18.6"/></svg></div>
<div class="ab" style="left:2921.8px;top:1489.50px"><svg width="50" height="41" stroke="#e4f6f1" stroke-width="1.6" fill="none" stroke-linecap="butt" stroke-linejoin="miter"><path d="M24.6 10.7 V27.6 M17.4 20.6 L24.6 27.6 L31.7 20.6"/></svg></div>
<div class="ab" style="left:2976.5px;top:1489.50px"><svg width="50" height="41" stroke="#e4f6f1" stroke-width="1.6" fill="none" stroke-linecap="butt" stroke-linejoin="miter"><path d="M15 13 H35 M21.6 12.8 V11 Q21.6 9.6 23 9.6 H28.2 Q29.6 9.6 29.6 11 V12.8 M18.6 13 V29.9 H33 V13 M23.9 17 V25.5 M27.9 17 V25.5"/></svg></div>
<div class="t cell en" style="left:487.5px;top:1560.70px">13</div>
<div class="t cell en" style="left:590.9px;top:1560.70px">create_user_org_id</div>
<div class="t cell" style="left:1034.9px;top:1560.70px">创建人父级机构ID</div>
<div class="t cell en" style="left:1376.0px;top:1560.70px">bigint</div>
<div class="t cell en" style="left:1583.8px;top:1560.70px">64</div>
<div class="t cell" style="left:1897.8px;top:1560.70px">否</div>
<div class="t cell" style="left:2055.6px;top:1560.70px">否</div>
<div class="t cell" style="left:2188.5px;top:1560.70px">否</div>
<div class="ab" style="left:2755.7px;top:1550.90px"><svg width="50" height="41" stroke="#e4f6f1" stroke-width="1.6" fill="none" stroke-linecap="butt" stroke-linejoin="miter"><path d="M16.6 11.5 H34.1 M25.4 15.3 V30 M17.6 23 L25.4 15.3 L33.2 23"/></svg></div>
<div class="ab" style="left:2811px;top:1550.90px"><svg width="50" height="41" stroke="#e4f6f1" stroke-width="1.6" fill="none" stroke-linecap="butt" stroke-linejoin="miter"><path d="M24.4 8.3 V24.3 M16.9 16.6 L24.4 24.3 L31.6 16.6 M15.9 23.8 V26.8 Q15.9 28.2 17.3 28.2 H31.6 Q33 28.2 33 26.8 V23.8"/></svg></div>
<div class="ab" style="left:2866px;top:1550.90px"><svg width="50" height="41" stroke="#e4f6f1" stroke-width="1.6" fill="none" stroke-linecap="butt" stroke-linejoin="miter"><path d="M25.4 11.4 V29 M18.2 18.6 L25.4 11.4 L32.6 18.6"/></svg></div>
<div class="ab" style="left:2921.8px;top:1550.90px"><svg width="50" height="41" stroke="#e4f6f1" stroke-width="1.6" fill="none" stroke-linecap="butt" stroke-linejoin="miter"><path d="M24.6 10.7 V27.6 M17.4 20.6 L24.6 27.6 L31.7 20.6"/></svg></div>
<div class="ab" style="left:2976.5px;top:1550.90px"><svg width="50" height="41" stroke="#e4f6f1" stroke-width="1.6" fill="none" stroke-linecap="butt" stroke-linejoin="miter"><path d="M15 13 H35 M21.6 12.8 V11 Q21.6 9.6 23 9.6 H28.2 Q29.6 9.6 29.6 11 V12.8 M18.6 13 V29.9 H33 V13 M23.9 17 V25.5 M27.9 17 V25.5"/></svg></div>
<div class="t cell en" style="left:487.5px;top:1622.10px">14</div>
<div class="t cell en" style="left:590.9px;top:1622.10px">create_user_org_name</div>
<div class="t cell" style="left:1034.9px;top:1622.10px">创建人父级机构名称</div>
<div class="t cell en" style="left:1376.0px;top:1622.10px">varchar</div>
<div class="t cell en" style="left:1583.8px;top:1622.10px">255</div>
<div class="t cell" style="left:1897.8px;top:1622.10px">否</div>
<div class="t cell" style="left:2055.6px;top:1622.10px">否</div>
<div class="t cell" style="left:2188.5px;top:1622.10px">否</div>
<div class="ab" style="left:2755.7px;top:1612.30px"><svg width="50" height="41" stroke="#e4f6f1" stroke-width="1.6" fill="none" stroke-linecap="butt" stroke-linejoin="miter"><path d="M16.6 11.5 H34.1 M25.4 15.3 V30 M17.6 23 L25.4 15.3 L33.2 23"/></svg></div>
<div class="ab" style="left:2811px;top:1612.30px"><svg width="50" height="41" stroke="#e4f6f1" stroke-width="1.6" fill="none" stroke-linecap="butt" stroke-linejoin="miter"><path d="M24.4 8.3 V24.3 M16.9 16.6 L24.4 24.3 L31.6 16.6 M15.9 23.8 V26.8 Q15.9 28.2 17.3 28.2 H31.6 Q33 28.2 33 26.8 V23.8"/></svg></div>
<div class="ab" style="left:2866px;top:1612.30px"><svg width="50" height="41" stroke="#e4f6f1" stroke-width="1.6" fill="none" stroke-linecap="butt" stroke-linejoin="miter"><path d="M25.4 11.4 V29 M18.2 18.6 L25.4 11.4 L32.6 18.6"/></svg></div>
<div class="ab" style="left:2921.8px;top:1612.30px"><svg width="50" height="41" stroke="#e4f6f1" stroke-width="1.6" fill="none" stroke-linecap="butt" stroke-linejoin="miter"><path d="M24.6 10.7 V27.6 M17.4 20.6 L24.6 27.6 L31.7 20.6"/></svg></div>
<div class="ab" style="left:2976.5px;top:1612.30px"><svg width="50" height="41" stroke="#e4f6f1" stroke-width="1.6" fill="none" stroke-linecap="butt" stroke-linejoin="miter"><path d="M15 13 H35 M21.6 12.8 V11 Q21.6 9.6 23 9.6 H28.2 Q29.6 9.6 29.6 11 V12.8 M18.6 13 V29.9 H33 V13 M23.9 17 V25.5 M27.9 17 V25.5"/></svg></div>
<div class="t cell en" style="left:487.5px;top:1683.50px">15</div>
<div class="t cell en" style="left:590.9px;top:1683.50px">create_user_org_full_id</div>
<div class="t cell" style="left:1034.9px;top:1683.50px">创建人父级组织全路径ID</div>
<div class="t cell en" style="left:1376.0px;top:1683.50px">varchar</div>
<div class="t cell en" style="left:1583.8px;top:1683.50px">2000</div>
<div class="t cell" style="left:1897.8px;top:1683.50px">否</div>
<div class="t cell" style="left:2055.6px;top:1683.50px">否</div>
<div class="t cell" style="left:2188.5px;top:1683.50px">否</div>
<div class="ab" style="left:2755.7px;top:1673.70px"><svg width="50" height="41" stroke="#e4f6f1" stroke-width="1.6" fill="none" stroke-linecap="butt" stroke-linejoin="miter"><path d="M16.6 11.5 H34.1 M25.4 15.3 V30 M17.6 23 L25.4 15.3 L33.2 23"/></svg></div>
<div class="ab" style="left:2811px;top:1673.70px"><svg width="50" height="41" stroke="#e4f6f1" stroke-width="1.6" fill="none" stroke-linecap="butt" stroke-linejoin="miter"><path d="M24.4 8.3 V24.3 M16.9 16.6 L24.4 24.3 L31.6 16.6 M15.9 23.8 V26.8 Q15.9 28.2 17.3 28.2 H31.6 Q33 28.2 33 26.8 V23.8"/></svg></div>
<div class="ab" style="left:2866px;top:1673.70px"><svg width="50" height="41" stroke="#e4f6f1" stroke-width="1.6" fill="none" stroke-linecap="butt" stroke-linejoin="miter"><path d="M25.4 11.4 V29 M18.2 18.6 L25.4 11.4 L32.6 18.6"/></svg></div>
<div class="ab" style="left:2921.8px;top:1673.70px"><svg width="50" height="41" stroke="#e4f6f1" stroke-width="1.6" fill="none" stroke-linecap="butt" stroke-linejoin="miter"><path d="M24.6 10.7 V27.6 M17.4 20.6 L24.6 27.6 L31.7 20.6"/></svg></div>
<div class="ab" style="left:2976.5px;top:1673.70px"><svg width="50" height="41" stroke="#e4f6f1" stroke-width="1.6" fill="none" stroke-linecap="butt" stroke-linejoin="miter"><path d="M15 13 H35 M21.6 12.8 V11 Q21.6 9.6 23 9.6 H28.2 Q29.6 9.6 29.6 11 V12.8 M18.6 13 V29.9 H33 V13 M23.9 17 V25.5 M27.9 17 V25.5"/></svg></div>
<div class="t cell" style="left:486.5px;top:946.70px">3</div>
<div class="inp" style="left:590px;top:933px;width:408px;height:47px;border-color:#57a3f3;border-width:1.5px"></div>
<div class="t en" style="left:595px;top:947px;font-size:20px;line-height:20px;color:#515a6e">adjust_field</div>
<div class="inp" style="left:1035px;top:933px;width:303px;height:47px"></div>
<div class="t" style="left:1039px;top:947px;font-size:20px;line-height:20px;color:#515a6e">变更字段</div>
<div class="inp" style="left:1376px;top:933px;width:170px;height:47px"></div>
<div class="t en" style="left:1380px;top:947px;font-size:20px;line-height:20px;color:#515a6e">varchar</div>
<svg class="a" style="left:1517px;top:950px" width="17" height="11"><path d="M0 0 H16 L8 10.5 Z" fill="#c5c8ce"/></svg>
<div class="inp" style="left:1584px;top:933px;width:119px;height:47px"></div>
<div class="t" style="left:1589px;top:947px;font-size:20px;line-height:20px;color:#515a6e">100</div>
<svg class="a" style="left:1674px;top:941px" width="17" height="30"><path d="M0 11 H16.5 L8.25 0.5 Z M0 18.5 H16.5 L8.25 29 Z" fill="#c5c8ce"/></svg>
<div class="inp" style="left:1741px;top:933px;width:119px;height:47px"></div>
<div class="t" style="left:1744px;top:947px;font-size:20px;line-height:20px;color:#c5c8ce">精度</div>
<svg class="a" style="left:1831px;top:941px" width="17" height="30"><path d="M0 11 H16.5 L8.25 0.5 Z M0 18.5 H16.5 L8.25 29 Z" fill="#c5c8ce"/></svg>
<div class="sw" style="left:1898px;top:942px;background:#47b39f"><div class="t" style="left:6px;top:7px;font-size:20px;line-height:20px;color:#fff">是</div><div class="knob" style="left:32.5px"></div></div>
<div class="sw" style="left:2056px;top:942px;background:#dadada"><div class="knob" style="left:6.5px"></div><div class="t" style="left:31px;top:7px;font-size:20px;line-height:20px;color:#fff">否</div></div>
<div class="sw" style="left:2188px;top:942px;background:#dadada"><div class="knob" style="left:6.5px"></div><div class="t" style="left:31px;top:7px;font-size:20px;line-height:20px;color:#fff">否</div></div>
<div class="inp" style="left:2319px;top:933px;width:357px;height:47px"></div>
<svg class="a" style="left:2646px;top:950px" width="17" height="11"><path d="M0 0 H16.5 L8.25 10.5 Z" fill="#c5c8ce"/></svg></body></html>
